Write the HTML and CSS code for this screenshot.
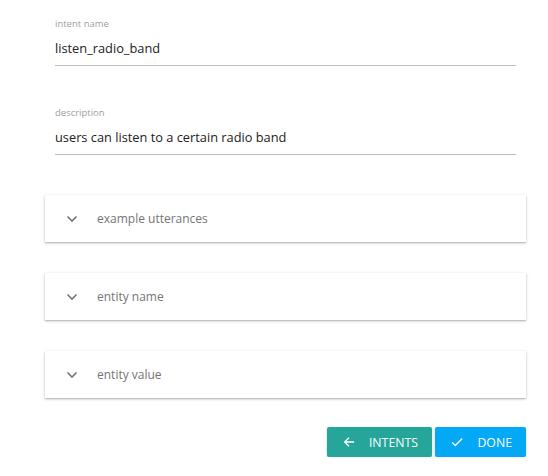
FILE: index.html
```html
<!DOCTYPE html>
<html>
<head>
<meta charset="utf-8">
<link rel="stylesheet" href="styles.css">
</head>
<body>
<div class="page">
  <div class="fields">
    <div class="field">
      <div class="label">intent name</div>
      <div class="value">listen_radio_band</div>
    </div>
    <div class="field">
      <div class="label">description</div>
      <div class="value">users can listen to a certain radio band</div>
    </div>
  </div>
  <div class="panels">
    <div class="panel">
      <svg class="chev" width="12" height="8" viewBox="0 0 12 8"><path d="M1.5 1.5 L6 6 L10.5 1.5" fill="none" stroke="#757575" stroke-width="1.6"/></svg>
      <span class="ptitle">example utterances</span>
    </div>
    <div class="panel">
      <svg class="chev" width="12" height="8" viewBox="0 0 12 8"><path d="M1.5 1.5 L6 6 L10.5 1.5" fill="none" stroke="#757575" stroke-width="1.6"/></svg>
      <span class="ptitle">entity name</span>
    </div>
    <div class="panel">
      <svg class="chev" width="12" height="8" viewBox="0 0 12 8"><path d="M1.5 1.5 L6 6 L10.5 1.5" fill="none" stroke="#757575" stroke-width="1.6"/></svg>
      <span class="ptitle">entity value</span>
    </div>
  </div>
  <div class="actions">
    <button class="btn teal">
      <svg width="14" height="14" viewBox="0 0 14 14"><path d="M13 7 H2 M7 2 L2 7 L7 12" fill="none" stroke="#fff" stroke-width="1.6"/></svg>
      <span>INTENTS</span>
    </button>
    <button class="btn blue">
      <svg width="16" height="14" viewBox="0 0 16 14"><path d="M1.5 7.5 L5.5 11.5 L14.5 2.5" fill="none" stroke="#fff" stroke-width="1.7"/></svg>
      <span>DONE</span>
    </button>
  </div>
</div>
</body>
</html>
```
FILE: styles.css
```css
html, body {
  margin: 0;
  padding: 0;
  background: #fff;
}
body {
  font-family: "Open Sans", "Noto Sans", sans-serif;
  color: #212121;
}
.page {
  width: 481px;
  margin-left: 45px;
  padding-top: 17px;
}
.fields {
  padding: 0 10px;
  display: flex;
  flex-direction: column;
  gap: 40px;
}
.field {
  border-bottom: 1px solid #bdbdbd;
  height: 48px;
  display: flex;
  flex-direction: column;
}
.label {
  font-size: 9.5px;
  color: #a0a0a0;
  line-height: 14px;
}
.value {
  margin-top: 8px;
  font-size: 12.8px;
  line-height: 18px;
  color: #212121;
}
.panels {
  margin-top: 40px;
  display: flex;
  flex-direction: column;
  gap: 31px;
}
.panel {
  height: 47px;
  background: #fff;
  box-shadow: 0 1px 3px rgba(0,0,0,0.22), 0 1px 1px rgba(0,0,0,0.12);
  display: flex;
  align-items: center;
  padding-left: 21px;
  box-sizing: border-box;
}
.chev {
  margin-right: 19px;
}
.ptitle {
  font-size: 12px;
  color: #757575;
}
.actions {
  margin-top: 29px;
  display: flex;
  justify-content: flex-end;
  gap: 3px;
}
.btn {
  height: 30px;
  border: none;
  border-radius: 2px;
  color: #fff;
  font-family: "Open Sans", "Noto Sans", sans-serif;
  font-size: 12.3px;
  display: flex;
  align-items: center;
  gap: 14px;
  padding: 0 14px 0 16px;
  box-shadow: 0 1px 3px rgba(0,0,0,0.2);
}
.teal {
  background: #26a69a;
  width: 105px;
}
.blue {
  background: #03a9f4;
  width: 91px;
}
```
